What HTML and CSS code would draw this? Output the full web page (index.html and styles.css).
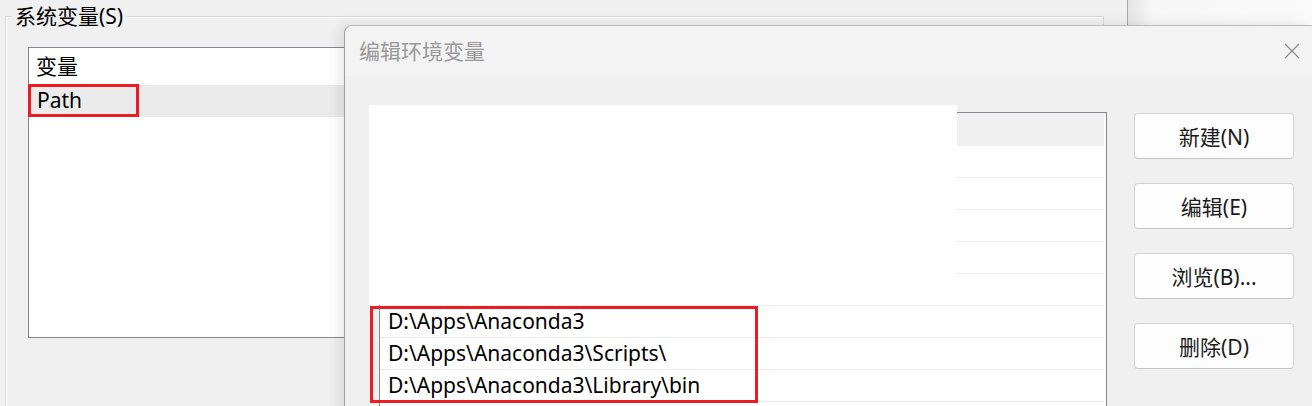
FILE: index.html
```html
<!DOCTYPE html>
<html lang="zh-CN">
<head>
<meta charset="utf-8">
<title>编辑环境变量</title>
<link rel="stylesheet" href="styles.css">
</head>
<body>
<div class="screen">
  <div class="bgwin">
    <div class="group">
      <span class="legend">系统变量(S)</span>
      <div class="listbox">
        <div class="lb-header">变量</div>
        <div class="lb-row selected">Path</div>
        <div class="annot annot-path"></div>
      </div>
    </div>
  </div>
  <div class="desktop"></div>

  <div class="dialog">
    <div class="titlebar">
      <span class="title">编辑环境变量</span>
      <svg class="close" width="16" height="16" viewBox="0 0 16 16" aria-hidden="true">
        <path d="M1 1 L15 15 M15 1 L1 15" stroke="#8c8c8c" stroke-width="1.2" fill="none"/>
      </svg>
    </div>
    <div class="dlg-body">
      <div class="listview">
        <div class="lv-row first"></div>
        <div class="lv-row"></div>
        <div class="lv-row"></div>
        <div class="lv-row"></div>
        <div class="lv-row"></div>
        <div class="lv-row"></div>
        <div class="lv-row">D:\Apps\Anaconda3</div>
        <div class="lv-row">D:\Apps\Anaconda3\Scripts\</div>
        <div class="lv-row">D:\Apps\Anaconda3\Library\bin</div>
      </div>
      <div class="buttons">
        <button class="btn">新建(N)</button>
        <button class="btn">编辑(E)</button>
        <button class="btn">浏览(B)...</button>
        <button class="btn">删除(D)</button>
      </div>
    </div>
    <div class="patch"></div>
    <div class="annot annot-paths"></div>
  </div>
</div>
</body>
</html>
```

FILE: styles.css
```css
* { box-sizing: border-box; }

html, body {
  margin: 0;
  padding: 0;
  background: #f0f0f0;
}

body {
  font-family: "Noto Sans", "Noto Sans CJK SC", sans-serif;
  font-size: 21px;
  color: #000;
}

.screen {
  position: relative;
  display: flex;
  width: 1312px;
  height: 406px;
  overflow: hidden;
}

/* background window */
.bgwin {
  width: 1128px;
  height: 100%;
  background: #f0f0f0;
  border-right: 1px solid #a9a9a9;
  padding: 16px 0 0 5px;
}

.desktop {
  flex: 1;
  background: linear-gradient(to right, #e4e4e4, #f6f6f6 24px, #fafafa);
}

.group {
  position: relative;
  width: 1099px;
  height: 420px;
  border: 1px solid #d9d9d9;
  box-shadow: inset 1px 1px 0 #ffffff;
  padding: 30px 0 0 22px;
}

.legend {
  position: absolute;
  top: -13px;
  left: 6px;
  padding: 0 3px;
  background: #f0f0f0;
  line-height: 24px;
  color: #000;
}

.listbox {
  position: relative;
  width: 420px;
  height: 291px;
  background: #fff;
  border: 1px solid #828790;
}

.lb-header {
  height: 37px;
  line-height: 37px;
  padding-left: 7px;
}

.lb-row {
  height: 32px;
  line-height: 31px;
  padding-left: 8px;
}

.lb-row.selected {
  background: #ebebeb;
}

.annot {
  position: absolute;
  border: 3px solid #ec1c24;
}

.annot-path {
  left: -1px;
  top: 36px;
  width: 111px;
  height: 33px;
}

/* dialog */
.dialog {
  position: absolute;
  left: 344px;
  top: 25px;
  width: 968px;
  height: 400px;
  background: #f0f0f0;
  border-top: 1px solid #b9b9b9;
  border-left: 1px solid #a0a0a0;
  border-top-left-radius: 8px;
  box-shadow: -5px 0 14px rgba(0, 0, 0, 0.09);
}

.titlebar {
  height: 50px;
  display: flex;
  align-items: center;
  justify-content: space-between;
  padding: 0 12px 0 14px;
  background: #f3f3f3;
  border-top-left-radius: 8px;
}

.title {
  color: #999999;
  font-size: 21px;
  line-height: 28px;
}

.close {
  display: block;
}

.dlg-body {
  display: flex;
  align-items: flex-start;
  padding: 36px 0 0 34px;
}

.listview {
  width: 728px;
  height: 340px;
  background: #fff;
  border: 1px solid #828790;
  border-bottom: none;
}

.lv-row {
  height: 32px;
  line-height: 31px;
  padding-left: 8px;
  margin-right: 2px;
  border-bottom: 1px solid #ececec;
  white-space: nowrap;
}

.lv-row.first {
  height: 33px;
  background: #f0f0f0;
  border-bottom-color: #f0f0f0;
}

.buttons {
  display: flex;
  flex-direction: column;
  gap: 24px;
  margin: 1px 0 0 27px;
}

.btn {
  width: 160px;
  height: 46px;
  background: #fdfdfd;
  border: 1px solid #d3d3d3;
  border-bottom-color: #c6c6c6;
  border-radius: 4px;
  font-family: "Noto Sans", "Noto Sans CJK SC", sans-serif;
  font-size: 21px;
  color: #1b1b1b;
  padding: 0;
}

.patch {
  position: absolute;
  left: 24px;
  top: 79px;
  width: 588px;
  height: 200px;
  background: #fff;
}

.annot-paths {
  left: 25px;
  top: 280px;
  width: 388px;
  height: 97px;
}
```
